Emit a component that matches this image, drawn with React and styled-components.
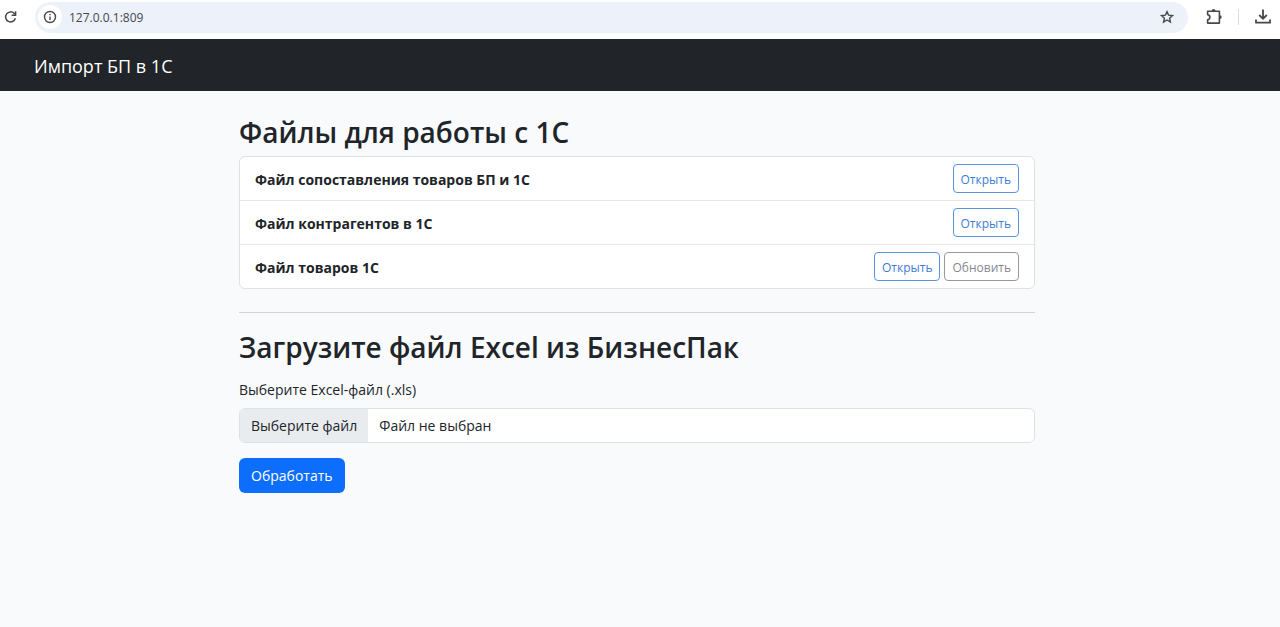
import { useState } from 'react';
import styled, { createGlobalStyle } from 'styled-components';

const GlobalStyle = createGlobalStyle`
  * {
    box-sizing: border-box;
  }

  body {
    margin: 0;
    background: #f8fafc;
    color: #212529;
    font-family: 'Open Sans', 'Noto Sans', sans-serif;
    font-size: 14px;
    line-height: 21px;
  }

  button,
  input {
    font-family: inherit;
  }
`;

const BrowserBar = styled.div`
  display: flex;
  align-items: center;
  height: 39px;
  padding: 0 8px 5px 1px;
  background: white;
`;

const IconButton = styled.button`
  display: flex;
  align-items: center;
  justify-content: center;
  width: ${props => props.$size || 18}px;
  height: ${props => props.$size || 18}px;
  flex-shrink: 0;
  padding: 0;
  border: none;
  border-radius: 50%;
  background: ${props => props.$background || 'transparent'};
  color: #45484c;
  cursor: pointer;
`;

const AddressBar = styled.div`
  display: flex;
  align-items: center;
  flex: 1;
  height: 31px;
  margin: 0 17px 0 16px;
  padding: 0 12px 0 3px;
  border-radius: 16px;
  background: #edf1f9;
`;

const AddressInput = styled.input`
  flex: 1;
  min-width: 0;
  height: 24px;
  margin-left: 7px;
  padding: 0;
  border: none;
  outline: none;
  background: transparent;
  color: #45484c;
  font-size: 12px;
`;

const BarDivider = styled.div`
  width: 1px;
  height: 16px;
  margin: 0 15px;
  background: #d5dcec;
`;

const Navbar = styled.nav`
  display: flex;
  align-items: center;
  height: 52px;
  padding: 2px 34px 0;
  background: #212529;
`;

const Brand = styled.a`
  color: white;
  font-size: 18px;
  line-height: 28px;
  text-decoration: none;
`;

const Container = styled.main`
  width: 100%;
  max-width: 816px;
  margin: 0 auto;
  padding: 24px 13px 24px 7px;
`;

const Title = styled.h2`
  margin: 0 0 ${props => props.$gap}px;
  font-size: 28px;
  font-weight: 600;
  line-height: 34px;
`;

const FileList = styled.ul`
  margin: 0;
  padding: 0;
  border: 1px solid #dee2e6;
  border-radius: 6px;
  background: white;
  list-style: none;
`;

const FileItem = styled.li`
  display: flex;
  align-items: center;
  justify-content: space-between;
  padding: 7px 15px;

  & + & {
    border-top: 1px solid #e6e9ec;
  }
`;

const FileName = styled.strong`
  padding-top: 2px;
  font-size: 14px;
  font-weight: 700;
`;

const Actions = styled.div`
  display: flex;
  gap: 4px;
`;

const OutlineBtn = styled.button`
  height: 29px;
  padding: 2px 7px 0;
  border: 1px solid ${props => (props.$secondary ? '#969a9e' : '#5795df')};
  border-radius: 4px;
  background: white;
  color: ${props => (props.$secondary ? '#85898d' : '#3c7bd6')};
  font-size: 12px;
  line-height: 20px;
  cursor: pointer;

  &:hover {
    background: ${props => (props.$secondary ? '#6c757d' : '#0d6efd')};
    color: white;
  }
`;

const Divider = styled.hr`
  margin: 23px 0 17px;
  border: none;
  border-top: 1px solid #d3d6d9;
`;

const Label = styled.label`
  display: block;
  margin-bottom: 8px;
`;

const FilePicker = styled.label`
  display: flex;
  height: 35px;
  margin-bottom: 15px;
  border: 1px solid #dee2e6;
  border-radius: 6px;
  background: white;
  overflow: hidden;
  cursor: pointer;

  &:focus-within {
    border-color: #86b7fe;
  }
`;

const HiddenInput = styled.input`
  position: absolute;
  width: 1px;
  height: 1px;
  opacity: 0;
`;

const PickerButton = styled.span`
  padding: 6px 11px;
  background: #e9ecef;
`;

const PickerText = styled.span`
  padding: 6px 11px;
`;

const SubmitBtn = styled.button`
  height: 35px;
  padding: 0 12px;
  border: none;
  border-radius: 6px;
  background: #0d6efd;
  color: white;
  font-size: 14px;
  line-height: 21px;
  cursor: pointer;

  &:hover {
    background: #0b5ed7;
  }
`;

const ReloadIcon = () => (
  <svg width="16" height="16" viewBox="0 0 16 16" fill="none" stroke="currentColor" strokeWidth="1.5">
    <path d="M13.4 9.3A5 5 0 1 1 12.3 4.5L13.3 5.6" />
    <path d="M13.6 2.2V6.2H9.6" />
  </svg>
);

const InfoIcon = () => (
  <svg width="14" height="14" viewBox="0 0 14 14" fill="none" stroke="currentColor" strokeWidth="1.4">
    <circle cx="7" cy="7" r="5.5" />
    <path d="M7 6.4V10M7 3.9V5.3" />
  </svg>
);

const StarIcon = () => (
  <svg width="16" height="16" viewBox="0 0 16 16" fill="none" stroke="currentColor" strokeWidth="1.4">
    <path d="M8 2.6L9.6 6.2L13.5 6.6L10.6 9.2L11.4 13L8 11L4.6 13L5.4 9.2L2.5 6.6L6.4 6.2Z" />
  </svg>
);

const ExtensionIcon = () => (
  <svg width="18" height="18" viewBox="0 0 18 18" fill="none" stroke="currentColor" strokeWidth="1.6">
    <path d="M2.6 3.3H14.4V15.1H2.6V11.8C5.6 11.3 5.6 7.1 2.6 6.6Z" strokeLinejoin="round" />
    <path d="M6.7 3A1.9 1.9 0 0 1 10.5 3ZM14.8 7.2A1.9 1.9 0 0 1 14.8 11Z" fill="currentColor" stroke="none" />
  </svg>
);

const DownloadIcon = () => (
  <svg width="18" height="18" viewBox="0 0 18 18" fill="none" stroke="currentColor" strokeWidth="1.8">
    <path d="M9 1.5V10.5M5.2 7L9 10.8L12.8 7" />
    <path d="M2 11.5V14.7H16V11.5" strokeLinejoin="round" />
  </svg>
);

const files = [
  { name: 'Файл сопоставления товаров БП и 1С' },
  { name: 'Файл контрагентов в 1С' },
  { name: 'Файл товаров 1С', canUpdate: true },
];

const App = () => {
  const [fileName, setFileName] = useState('');

  function onFileChange(e) {
    const file = e.target.files[0];
    setFileName(file ? file.name : '');
  }

  function onSubmit(e) {
    e.preventDefault();
  }

  return (
    <>
      <GlobalStyle />
      <BrowserBar>
        <IconButton aria-label="Обновить страницу">
          <ReloadIcon />
        </IconButton>
        <AddressBar>
          <IconButton $size={24} $background="white" aria-label="Сведения о сайте">
            <InfoIcon />
          </IconButton>
          <AddressInput aria-label="Адресная строка" defaultValue="127.0.0.1:809" />
          <IconButton aria-label="Добавить в закладки">
            <StarIcon />
          </IconButton>
        </AddressBar>
        <IconButton aria-label="Расширения">
          <ExtensionIcon />
        </IconButton>
        <BarDivider />
        <IconButton aria-label="Загрузки">
          <DownloadIcon />
        </IconButton>
      </BrowserBar>
      <Navbar>
        <Brand href="#">Импорт БП в 1С</Brand>
      </Navbar>
      <Container>
        <Title $gap={7}>Файлы для работы с 1С</Title>
        <FileList>
          {files.map(({ name, canUpdate }) => (
            <FileItem key={name}>
              <FileName>{name}</FileName>
              <Actions>
                <OutlineBtn>Открыть</OutlineBtn>
                {canUpdate && <OutlineBtn $secondary>Обновить</OutlineBtn>}
              </Actions>
            </FileItem>
          ))}
        </FileList>
        <Divider />
        <Title $gap={15}>Загрузите файл Excel из БизнесПак</Title>
        <form onSubmit={onSubmit}>
          <Label htmlFor="excel-file">Выберите Excel-файл (.xls)</Label>
          <FilePicker>
            <HiddenInput id="excel-file" type="file" accept=".xls" onChange={onFileChange} />
            <PickerButton>Выберите файл</PickerButton>
            <PickerText>{fileName || 'Файл не выбран'}</PickerText>
          </FilePicker>
          <SubmitBtn type="submit">Обработать</SubmitBtn>
        </form>
      </Container>
    </>
  );
};

export default App;
